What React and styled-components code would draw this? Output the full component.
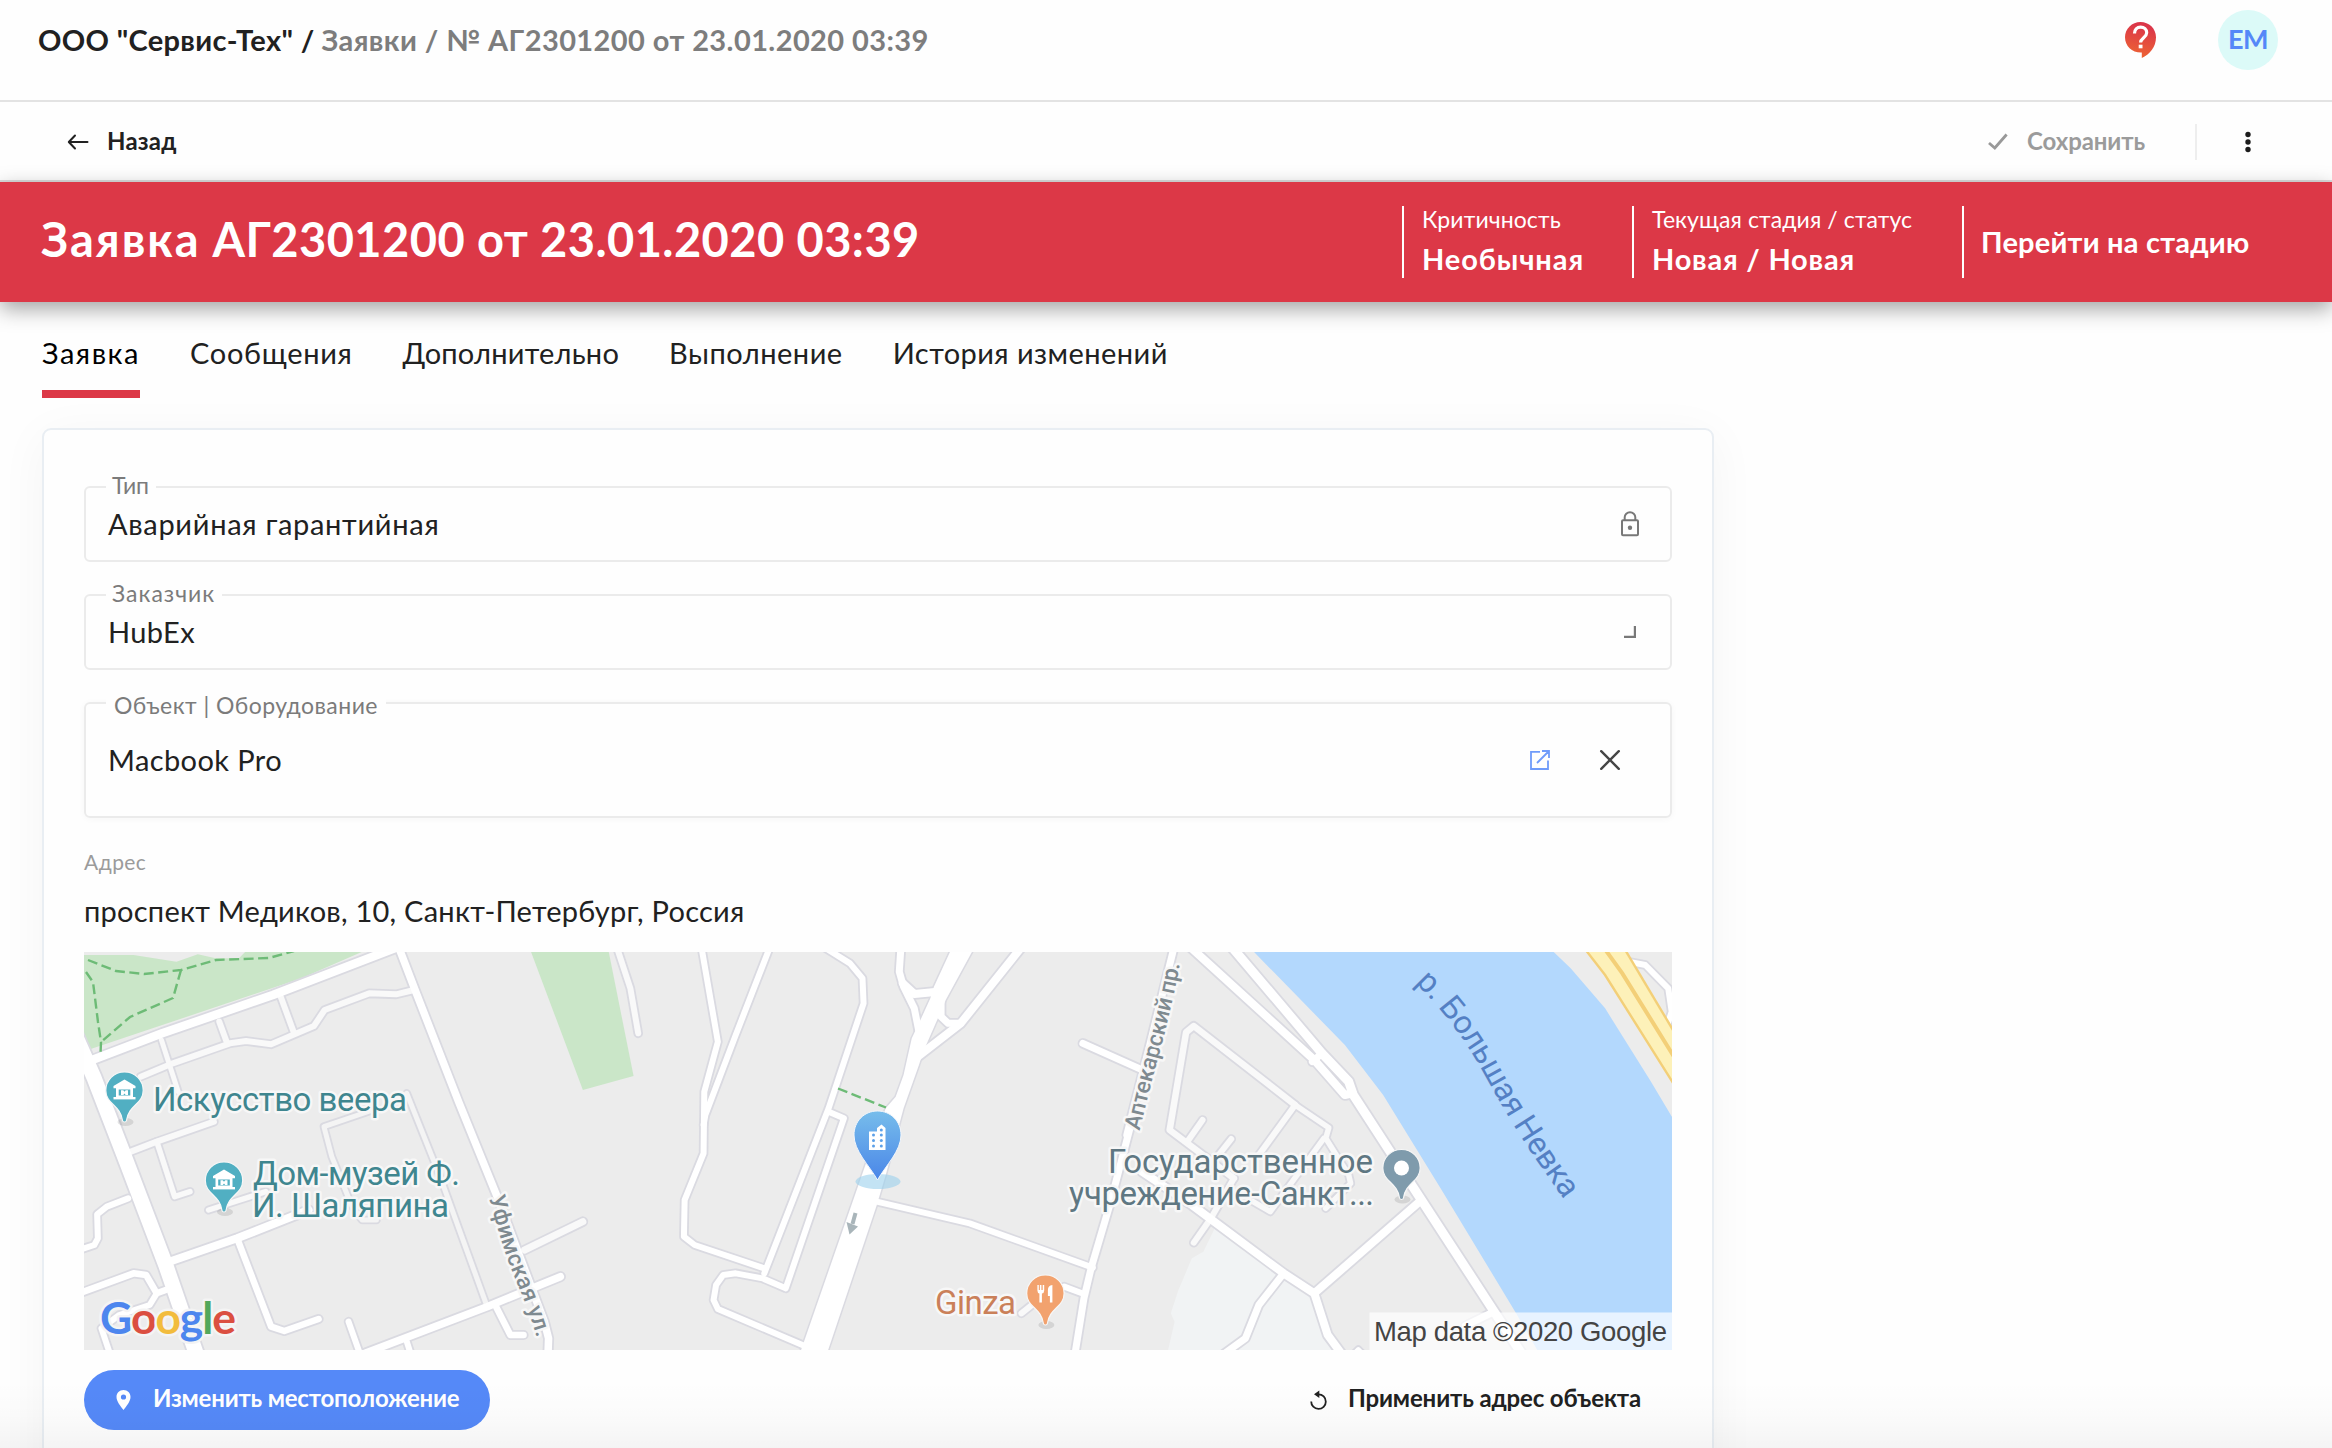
import React from 'react';
import styled, { createGlobalStyle, css } from 'styled-components';

const Global = createGlobalStyle`
  *, *::before, *::after { box-sizing: border-box; }
  body {
    margin: 0;
    background: #fefefe;
    color: #212121;
    font-family: Lato, 'Open Sans', sans-serif;
    font-size: 29px;
    overflow: hidden;
  }
  button {
    border: 0;
    padding: 0;
    background: none;
    font: inherit;
    color: inherit;
  }
`;

const Page = styled.div`
  position: relative;
  display: flex;
  flex-direction: column;
  height: 1448px;
  overflow: hidden;
`;

const BottomFade = styled.div`
  position: absolute;
  left: 0;
  right: 0;
  bottom: 0;
  height: 68px;
  background: linear-gradient(rgba(0, 0, 0, 0), rgba(0, 0, 0, 0.012) 50%, rgba(0, 0, 0, 0.04));
  pointer-events: none;
`;

/* Header */

const Header = styled.header`
  flex: none;
  display: flex;
  align-items: center;
  height: 102px;
  padding: 0 54px 20px 38px;
  border-bottom: 2px solid #e3e3e3;
`;

const Crumbs = styled.nav`
  display: flex;
  gap: 7px;
  padding-bottom: 2px;
  font-weight: 700;
  white-space: nowrap;
`;

const Company = styled.span`
  letter-spacing: 0.34px;
`;

const Trail = styled.span`
  color: #7d7d7d;
  letter-spacing: 0.41px;
`;

const HeaderTools = styled.div`
  display: flex;
  align-items: center;
  gap: 62px;
  margin-left: auto;
`;

const Avatar = styled.div`
  width: 60px;
  height: 60px;
  padding-bottom: 3px;
  border-radius: 50%;
  background: #dcfaf8;
  color: #5588f8;
  display: flex;
  align-items: center;
  justify-content: center;
  font-size: 27px;
  font-weight: 700;
  letter-spacing: -0.6px;
`;

/* Toolbar */

const Toolbar = styled.div`
  flex: none;
  display: flex;
  align-items: center;
  height: 80px;
  padding: 2px 81px 0 66px;
  border-bottom: 2px solid #dcdcdc;
`;

const ToolButton = styled.button`
  display: flex;
  align-items: center;
  gap: ${(p) => p.$gap}px;
  color: ${(p) => p.$color || '#212121'};
  font-size: 24px;
  font-weight: 700;
  letter-spacing: ${(p) => p.$track || 0}px;
  line-height: 30px;
`;

const Raised = styled.span`
  padding-bottom: ${(p) => p.$by}px;
`;

const ToolbarEnd = styled.div`
  display: flex;
  align-items: center;
  margin-left: auto;
`;

const ToolDivider = styled.div`
  width: 2px;
  height: 36px;
  margin: 0 48px 0 50px;
  background: #eeeeee;
`;

/* Banner */

const Banner = styled.section`
  flex: none;
  position: relative;
  display: flex;
  align-items: center;
  height: 120px;
  padding-left: 41px;
  background: #dc3847;
  color: #fff;
  box-shadow: 0 7px 20px rgba(0, 0, 0, 0.36);
`;

const Title = styled.h1`
  margin: 0;
  padding-bottom: 6px;
  font-size: 47px;
  font-weight: 700;
  letter-spacing: 0.42px;
  white-space: nowrap;
`;

const TitleKind = styled.span`
  letter-spacing: 2px;
`;

const Facts = styled.div`
  display: flex;
  margin-left: auto;
`;

const Fact = styled.div`
  width: ${(p) => p.$width}px;
  height: 72px;
  padding-left: 18px;
  border-left: 2px solid #fff;
  white-space: nowrap;
`;

const FactLabel = styled.div`
  font-size: 23px;
  line-height: 27px;
  letter-spacing: 0.1px;
`;

const FactValue = styled.div`
  margin-top: 12px;
  font-weight: 700;
  line-height: 28px;
  letter-spacing: ${(p) => p.$track}px;
`;

const StageLink = styled(Fact).attrs({ as: 'button' })`
  display: flex;
  align-items: center;
  padding: 0 0 2px 17px;
  font-weight: 700;
  letter-spacing: 0.22px;
  border-left: 2px solid #fff;
`;

/* Tabs */

const Tabs = styled.nav`
  flex: none;
  display: flex;
  gap: 50px;
  padding: 31px 0 0 42px;
`;

const Tab = styled.button`
  padding-bottom: 17px;
  border-bottom: 8px solid transparent;
  line-height: 40px;
  letter-spacing: ${(p) => p.$track}px;
  ${(p) =>
    p.$active &&
    css`
      color: #000;
      border-bottom-color: #dc3847;
    `}
`;

/* Card */

const Card = styled.main`
  flex: none;
  width: 1672px;
  height: 1100px;
  margin: 30px 0 0 42px;
  padding: 56px 40px 0;
  border: 2px solid #e9eef3;
  border-radius: 9px;
  box-shadow: 0 8px 50px rgba(0, 0, 0, 0.045);
`;

const Field = styled.div`
  position: relative;
  display: flex;
  align-items: center;
  height: ${(p) => (p.$tall ? 116 : 76)}px;
  padding: 0 ${(p) => (p.$tall ? 48 : 28)}px 0 22px;
  border: 2px solid #ebebeb;
  border-radius: 6px;
  ${(p) => p.$tall && 'box-shadow: 0 1px 7px rgba(0, 0, 0, 0.035);'}

  & + & {
    margin-top: 32px;
  }
`;

const FieldLabel = styled.label`
  position: absolute;
  left: 20px;
  top: ${(p) => (p.$low ? -12 : -16)}px;
  padding: 0 ${(p) => (p.$low ? 8 : 7)}px 0 ${(p) => (p.$low ? 8 : 6)}px;
  background: #fefefe;
  color: #7b7b7b;
  font-size: 23px;
  line-height: 27px;
  letter-spacing: ${(p) => p.$track}px;
`;

const FieldValue = styled.span`
  padding-bottom: 2px;
  letter-spacing: ${(p) => p.$track}px;
`;

const FieldIcons = styled.span`
  display: flex;
  gap: 46px;
  margin-left: auto;

  svg {
    display: block;
  }
`;

const AddressLabel = styled.div`
  margin-top: 31px;
  color: #9b9b9b;
  font-size: 21px;
  line-height: 26px;
  letter-spacing: 0.4px;
`;

const Address = styled.div`
  margin-top: 18px;
  line-height: 36px;
  letter-spacing: 0.24px;
`;

const MapSvg = styled.svg`
  display: block;
  width: 1588px;
  height: 398px;
  margin-top: 23px;
  background: #ececec;
`;

const Actions = styled.div`
  display: flex;
  align-items: center;
  justify-content: space-between;
  margin-top: 20px;
  padding-right: 31px;
`;

const PrimaryButton = styled(ToolButton)`
  width: 406px;
  height: 60px;
  padding-left: 32px;
  border-radius: 30px;
  background: #5589f8;
  color: #fff;
`;

/* Icons */

const HelpIcon = () => (
  <svg width="31" height="36" viewBox="0 0 31 36">
    <defs>
      <linearGradient id="help" x1="0.6" y1="0" x2="0.4" y2="1">
        <stop offset="0.1" stopColor="#db3649" />
        <stop offset="1" stopColor="#ee6533" />
      </linearGradient>
    </defs>
    <path d="M15.5 0C24 0 31 6.6 31 15.2 31 25 24.500 32.500 16.800 36V30.600C7.300 31 0 24.200 0 15.300 0 6.700 7 0 15.500 0Z" fill="url(#help)" />
    <path d="M9.500 11.500C9.500 7.800 12 5.200 15.600 5.200C19.200 5.200 21.700 7.500 21.700 10.800C21.700 15.500 15.600 15.800 15.600 20.500" fill="none" stroke="#fff" strokeWidth="3.200" />
    <rect x="13.700" y="22.700" width="3.800" height="3.600" fill="#fff" />
  </svg>
);

const BackIcon = () => (
  <svg width="24" height="16" viewBox="0 0 24 16" fill="none" stroke="#212121" strokeWidth="2" strokeLinecap="round" strokeLinejoin="round">
    <path d="M21.500 8H3M9 1.500L2.800 8L9 14.500" />
  </svg>
);

const CheckIcon = () => (
  <svg width="20" height="18" viewBox="0 0 20 18" fill="none" stroke="#999" strokeWidth="2.800">
    <path d="M1 10L6.800 15L18.600 1.500" />
  </svg>
);

const DotsIcon = () => (
  <svg width="6" height="22" viewBox="0 0 6 22" fill="#1c1c1c">
    <circle cx="3" cy="3.500" r="2.700" />
    <circle cx="3" cy="11" r="2.700" />
    <circle cx="3" cy="18.500" r="2.700" />
  </svg>
);

const LockIcon = () => (
  <svg width="24" height="26" viewBox="0 0 24 26" fill="none" stroke="#787878" strokeWidth="2">
    <rect x="4" y="9.200" width="16" height="15" rx="1" />
    <path d="M6.700 9V6.200a5.300 5 0 0 1 10.600 0v3" />
    <circle cx="12" cy="16.700" r="2.200" fill="#787878" stroke="none" />
  </svg>
);

const CornerIcon = () => (
  <svg width="24" height="24" viewBox="0 0 24 24" fill="none" stroke="#787878" strokeWidth="2.200">
    <path d="M6 16.900H16.900V6" />
  </svg>
);

const OpenIcon = () => (
  <svg width="24" height="24" viewBox="0 0 24 24" fill="none" stroke="#6f9bfa" strokeWidth="1.800">
    <path d="M12 3.900H3V21H20V12.500M14 3H21V10M21 3L9 15" />
  </svg>
);

const CloseIcon = () => (
  <svg width="24" height="24" viewBox="0 0 24 24" fill="none" stroke="#454545" strokeWidth="2.400" strokeLinecap="round">
    <path d="M3.200 3.200L20.800 20.800M20.800 3.200L3.200 20.800" />
  </svg>
);

const PlaceIcon = () => (
  <svg width="15" height="20" viewBox="0 0 15 20">
    <path fillRule="evenodd" fill="#fff" d="M7.500 0C11.600 0 14.500 3 14.500 7C14.500 11.500 10.500 16 7.500 20C4.500 16 0.500 11.500 0.500 7C0.500 3 3.400 0 7.500 0ZM7.500 4.400A2.600 2.600 0 1 0 7.500 9.600A2.600 2.600 0 1 0 7.500 4.400Z" />
  </svg>
);

const UndoIcon = () => (
  <svg width="18" height="20" viewBox="0 0 18 20" fill="none" stroke="#212121" strokeWidth="1.800">
    <path d="M1.200 11.500A7.300 7.300 0 1 0 8.500 4.300H6" />
    <path d="M9.300 0.500V8L4 4.300Z" fill="#212121" stroke="none" />
  </svg>
);

/* Map */

const SHEETS = [
  {
    id: 'west',
    transform: 'translate(80 945) scale(0.35714 0.33333)',
    roads: [
      ['M820 495L683 545L705 635L760 780L790 825L830 825', 5, '#f4f4f4'],
      ['M915 445L1010 700L1140 1085', 5, '#f4f4f4'],
      ['M170 395L260 355L420 295L465 288L535 298L655 243L685 195L810 145L885 148L935 135', 6, '#f9f9f9'],
      ['M228 285L275 440', 5, '#f9f9f9'],
      ['M390 230L412 295', 6, '#f9f9f9'],
      ['M562 155L598 260', 6, '#f9f9f9'],
      ['M130 625L215 590L375 530', 6, '#f9f9f9'],
      ['M215 590L265 755L308 740', 5.5, '#f9f9f9'],
      ['M135 760L75 785L48 808L50 880L40 900L0 914', 6],
      ['M360 795L520 740', 5.5, '#f9f9f9'],
      ['M250 950L440 880L640 795', 8],
      ['M440 880L535 1145L572 1158L668 1122', 6.5],
      ['M0 1044L150 985L185 990L215 1045L240 1035', 6.5],
      ['M215 1045L195 1080L110 1110L60 1150L85 1230', 6],
      ['M1245 915L1408 830', 7, '#f9f9f9'],
      ['M1165 1085L1205 1170L1242 1170', 6.5],
      ['M752 1130L785 1230', 6],
      ['M915 1190L930 1240', 6],
      ['M800 1224L1140 1085L1345 995', 7.5],
      ['M890 0L940 140L1060 470L1170 760L1300 1130L1312 1180L1310 1240', 7.5],
      ['M10 355L230 265L540 150L900 2', 8.5],
      ['M-30 230L40 400L130 650L240 960L330 1240', 15],
    ],
  },
  {
    id: 'center',
    transform: 'translate(600 945) scale(0.35714 0.33333)',
    roads: [
      ['M45 0L85 130L107 265', 6, '#f9f9f9'],
      ['M283 0L330 290L292 440L290 625L237 765L235 875L265 900L460 970', 6],
      ['M478 0L380 270L295 510L290 540', 6],
      ['M625 5L700 55L735 100L738 175L640 490L460 985', 6],
      ['M640 500L683 520L520 1030L455 1000L380 985L345 990L325 1020L318 1065L330 1092L580 1206', 6],
      ['M843 0L838 80L850 125L880 190L893 260', 7],
      ['M848 115L880 147L945 140', 8],
      ['M1185 0L1010 235L890 335', 8],
      ['M955 150L955 215L975 235L1010 235', 7],
      ['M775 770L1035 835L1380 968', 6],
      ['M1352 295L1515 373', 7],
      ['M1300 1025L1355 1047', 6],
      ['M1180 1105L1215 1075', 6, '#f9f9f9'],
      ['M1485 545L1430 770L1375 970L1355 1060L1328 1240', 7],
    ],
  },
  {
    id: 'east',
    transform: 'translate(1100 945) scale(0.38265 0.33333)',
    roads: [
      ['M510 480L245 243L225 262L182 555L350 700', 6.5, '#f9f9f9'],
      ['M510 480L598 548L590 580L650 690L655 715L590 790', 5.5, '#f9f9f9'],
      ['M510 480L415 630', 6, '#f9f9f9'],
      ['M585 580L445 800L400 770', 5.5, '#f9f9f9'],
      ['M228 590L268 525', 6, '#f9f9f9'],
      ['M310 630L343 582', 6, '#f9f9f9'],
      ['M350 700L290 820L245 893', 6, '#f9f9f9'],
      ['M110 680L240 780L480 985L560 1045L595 1170L640 1240', 8],
      ['M840 765L560 1045', 8],
      ['M480 985L415 1080L380 1180L320 1230', 7],
      ['M1030 1100L955 1142', 7],
      ['M650 1240L675 1212L700 1240', 4],
      ['M195 0L130 300L70 570', 7],
      ['M230 0L560 345L640 450L660 445', 8],
      ['M340 0L580 325L650 410L662 450L840 765L1030 1100L1110 1240', 9],
      ['M555 350L580 325', 7],
      ['M1380 50L1425 60L1485 130L1494 200L1480 250', 6],
    ],
  },
];

const MAIN_ROAD =
  'M989 0L935 125L925 160L893 235L873 280L850 390L828 455L800 490L740 670L555 1240L631 1240L775 780L800 690L850 490L893 360L905 320L948 215L968 165L1052 0Z';

const Halo = styled.text`
  font-family: Roboto, sans-serif;
  font-size: ${(p) => p.$size || 33}px;
  font-weight: ${(p) => p.$weight || 400};
  fill: ${(p) => p.$fill};
  stroke: ${(p) => (p.$bare ? 'none' : '#f7f7f7')};
  stroke-width: 5px;
  stroke-linejoin: round;
  paint-order: stroke;
`;

const Pin = ({ x, y, color, children }) => (
  <g transform={`translate(${x} ${y})`}>
    <ellipse cx="1" cy="50" rx="8" ry="4" fill="#000" opacity="0.1" />
    <path
      d="M0 0C10.500 0 18.700 8 18.700 18.500C18.700 32 4 33 2 48.500C1.600 50.500 -1.600 50.500 -2 48.500C-4 33 -18.700 32 -18.700 18.500C-18.700 8 -10.500 0 0 0Z"
      fill={color}
      stroke="#f7f7f7"
      strokeWidth="1.200"
    />
    {children}
  </g>
);

const MuseumGlyph = () => (
  <g fill="#fff">
    <path d="M0 7.500L11 14V16.200H-11V14Z" />
    <path fillRule="evenodd" d="M-8.500 16H8.500V25H-8.500ZM-5.800 17.500V23.500H5.800V17.500Z" />
    <path d="M-3.500 18.200H-1.200L0 19.800L1.200 18.200H3.500V23H1.200L0 21.500L-1.200 23H-3.500Z" />
    <rect x="-11" y="25" width="22" height="2.400" />
  </g>
);

const LocationMap = () => (
  <MapSvg viewBox="84 952 1588 398">
    <defs>
      <linearGradient id="pin" x1="0" y1="0" x2="0" y2="1">
        <stop offset="0" stopColor="#77bdeb" />
        <stop offset="1" stopColor="#4a86e8" />
      </linearGradient>
      <path id="ufimskaya" d="M489 1197Q503 1250 514 1276Q529 1310 539 1345" />
      <path id="aptekarsky" d="M1139.500 1131L1152 1080Q1172 1010 1181 958" />
      <path id="nevka" d="M1415 983Q1456 1022 1488 1081Q1521 1142 1572 1210" />
    </defs>

    <g transform={SHEETS[0].transform}>
      <path d="M0 30H150L270 50L330 28L380 40H445L465 18H795L620 100L30 312L0 240Z" fill="#cae6c8" />
      <path d="M1262 18H1480L1550 393L1408 435Z" fill="#cae6c8" />
    </g>
    <g transform={SHEETS[2].transform}>
      <path d="M300 850L480 985L560 1045L600 1170L640 1230H175L195 1130L185 1105L205 1035L240 940L270 920Z" fill="#f1f3f4" />
      <path d="M400 18L640 300L740 450L890 730L1085 1100L1150 1230H1510V545L1440 410L1320 190L1230 70L1183 18Z" fill="#b3d8fd" />
    </g>

    {SHEETS.map((sheet) => (
      <g key={sheet.id} transform={sheet.transform} fill="none" stroke="#dadae1" strokeLinecap="round" strokeLinejoin="round">
        {sheet.roads.map(([d, width]) => (
          <path key={d} d={d} strokeWidth={width + 3.6} vectorEffect="non-scaling-stroke" />
        ))}
        {sheet.id === 'center' && <path d={MAIN_ROAD} strokeWidth="3" vectorEffect="non-scaling-stroke" />}
      </g>
    ))}
    {SHEETS.map((sheet) => (
      <g key={sheet.id} transform={sheet.transform} fill="none" strokeLinecap="round" strokeLinejoin="round">
        {sheet.roads.map(([d, width, color]) => (
          <path key={d} d={d} stroke={color || '#fff'} strokeWidth={width} vectorEffect="non-scaling-stroke" />
        ))}
        {sheet.id === 'center' && <path d={MAIN_ROAD} fill="#fff" />}
      </g>
    ))}

    <g transform={SHEETS[2].transform}>
      <path d="M1268 10L1320 90L1500 418V255L1368 10Z" fill="#fdf1b9" />
      <g fill="none" stroke="#f3cf78">
        <path d="M1266 10L1320 90L1500 418" strokeWidth="2.400" vectorEffect="non-scaling-stroke" />
        <path d="M1318 10L1365 85L1500 335" strokeWidth="4" vectorEffect="non-scaling-stroke" />
        <path d="M1370 10L1500 260" strokeWidth="2.400" vectorEffect="non-scaling-stroke" />
      </g>
    </g>

    <g fill="none" stroke="#6dbb76" strokeWidth="2.400" strokeDasharray="10 4.500">
      <path d="M88 960L116 971L144 974L181 970L216 960L269 958L294 951" />
      <path d="M181 970L173 998L130 1017L101 1042" />
      <path d="M86 972L93 982L98 1022L101 1042L100.500 1054" />
      <path d="M838 1088.500L886 1107.500" />
    </g>
    <path d="M855.500 1213L852.500 1224" stroke="#a9b5ba" strokeWidth="4" />
    <path d="M846.500 1222L858 1226.500L849.500 1234.500Z" fill="#a9b5ba" />

    <Halo $fill="#7f8a90" $size={23} $weight={500}>
      <textPath href="#ufimskaya" textLength="149">Уфимская ул.</textPath>
    </Halo>
    <Halo $fill="#7f8a90" $size={23} $weight={500}>
      <textPath href="#aptekarsky" textLength="172">Аптекарский пр.</textPath>
    </Halo>
    <Halo $fill="#5480c4" $size={32} $bare>
      <textPath href="#nevka" textLength="264">р. Большая Невка</textPath>
    </Halo>
    <Halo x="153" y="1111" textLength="254" $fill="#3f868f">Искусство веера</Halo>
    <Halo x="253" y="1184.500" textLength="207" $fill="#3f868f">Дом-музей Ф.</Halo>
    <Halo x="252" y="1217" textLength="197" $fill="#3f868f">И. Шаляпина</Halo>
    <Halo x="1108" y="1172.500" textLength="265" $fill="#5f7782">Государственное</Halo>
    <Halo x="1069" y="1205" textLength="305" $fill="#5f7782">учреждение-Санкт...</Halo>
    <Halo x="935" y="1314" textLength="81" $fill="#ca8059">Ginza</Halo>

    <Pin x={124.5} y={1072} color="#51afc2"><MuseumGlyph /></Pin>
    <Pin x={224} y={1162} color="#51afc2"><MuseumGlyph /></Pin>
    <Pin x={1401.5} y={1149.5} color="#7f9bac"><circle cx="0" cy="18.500" r="7.500" fill="#fff" /></Pin>
    <Pin x={1045.4} y={1275} color="#f2a26e">
      <path d="M-8 10V15.500Q-8 18 -6 18.500V27.500H-3.500V18.500Q-1.200 18 -1.200 15.500V10H-2.700V15H-4V10H-5.500V15H-6.600V10ZM7 10V27.500H4.500V21H2.500V15Q2.500 10.500 7 10Z" fill="#fff" />
    </Pin>

    <ellipse cx="878" cy="1181.500" rx="22.500" ry="7.500" fill="#9bd1ec" opacity="0.6" />
    <path d="M877.500 1111C891 1111 901 1121.500 901 1135C901 1151 886 1165 877.500 1180C869 1165 854 1151 854 1135C854 1121.500 864 1111 877.500 1111Z" fill="url(#pin)" stroke="#f4f7fb" strokeWidth="1" />
    <path d="M869 1131.500H877V1128L881.500 1124.500L885.500 1128V1150H869Z" fill="#fff" />
    <g fill="#5ca0e8">
      {[1135, 1140.5, 1146].map((y) => (
        <React.Fragment key={y}>
          <circle cx="873.500" cy={y} r="1.500" />
          <circle cx="881.300" cy={y} r="1.500" />
        </React.Fragment>
      ))}
      <circle cx="881.300" cy="1130" r="1.500" />
    </g>

    <text x="100" y="1333.500" fontFamily="Lato, sans-serif" fontWeight="700" fontSize="44.500" textLength="136" strokeWidth="5" stroke="#f4f4f4" strokeLinejoin="round" paintOrder="stroke">
      <tspan fill="#4d86ee">G</tspan>
      <tspan fill="#db4f41">o</tspan>
      <tspan fill="#f2bc3d">o</tspan>
      <tspan fill="#4d86ee">g</tspan>
      <tspan fill="#53a85b">l</tspan>
      <tspan fill="#db4f41">e</tspan>
    </text>

    <rect x="1369.500" y="1312.500" width="303" height="38" fill="#fff" opacity="0.7" />
    <text x="1374" y="1341" fontFamily="'Liberation Sans', Arial, sans-serif" fontSize="27.500" textLength="293" fill="#444">
      Map data ©2020 Google
    </text>
  </MapSvg>
);

const TABS = [
  { name: 'Заявка', track: 1.5 },
  { name: 'Сообщения', track: 0.68 },
  { name: 'Дополнительно', track: 0.22 },
  { name: 'Выполнение', track: 0.5 },
  { name: 'История изменений', track: 0.45 },
];

export default function App() {
  return (
    <Page>
      <Global />
      <Header>
        <Crumbs>
          <Company>ООО "Сервис-Тех" /</Company>
          <Trail>Заявки / № АГ2301200 от 23.01.2020 03:39</Trail>
        </Crumbs>
        <HeaderTools>
          <HelpIcon />
          <Avatar>EM</Avatar>
        </HeaderTools>
      </Header>

      <Toolbar>
        <ToolButton $gap={17} $track={0.2}>
          <BackIcon />
          <Raised $by={3}>Назад</Raised>
        </ToolButton>
        <ToolbarEnd>
          <ToolButton $gap={19} $color="#9b9b9b" $track={-0.1}>
            <CheckIcon />
            <Raised $by={3}>Сохранить</Raised>
          </ToolButton>
          <ToolDivider />
          <DotsIcon />
        </ToolbarEnd>
      </Toolbar>

      <Banner>
        <Title>
          <TitleKind>Заявка</TitleKind> АГ2301200 от 23.01.2020 03:39
        </Title>
        <Facts>
          <Fact $width={230}>
            <FactLabel>Критичность</FactLabel>
            <FactValue $track={0.9}>Необычная</FactValue>
          </Fact>
          <Fact $width={330}>
            <FactLabel>Текущая стадия / статус</FactLabel>
            <FactValue $track={0.78}>Новая / Новая</FactValue>
          </Fact>
          <StageLink $width={370}>Перейти на стадию</StageLink>
        </Facts>
      </Banner>

      <Tabs>
        {TABS.map((tab, i) => (
          <Tab key={tab.name} $track={tab.track} $active={i === 0}>
            {tab.name}
          </Tab>
        ))}
      </Tabs>

      <Card>
        <Field>
          <FieldLabel $track={-0.1}>Тип</FieldLabel>
          <FieldValue $track={0.7}>Аварийная гарантийная</FieldValue>
          <FieldIcons>
            <LockIcon />
          </FieldIcons>
        </Field>
        <Field>
          <FieldLabel $track={1}>Заказчик</FieldLabel>
          <FieldValue $track={0.4}>HubEx</FieldValue>
          <FieldIcons>
            <CornerIcon />
          </FieldIcons>
        </Field>
        <Field $tall>
          <FieldLabel $low $track={0.46}>Объект | Оборудование</FieldLabel>
          <FieldValue $track={0.4}>Macbook Pro</FieldValue>
          <FieldIcons>
            <OpenIcon />
            <CloseIcon />
          </FieldIcons>
        </Field>

        <AddressLabel>Адрес</AddressLabel>
        <Address>проспект Медиков, 10, Санкт-Петербург, Россия</Address>
        <LocationMap />

        <Actions>
          <PrimaryButton $gap={22} $track={-0.2}>
            <PlaceIcon />
            <Raised $by={4}>Изменить местоположение</Raised>
          </PrimaryButton>
          <ToolButton $gap={20} $track={-0.13}>
            <UndoIcon />
            <Raised $by={4}>Применить адрес объекта</Raised>
          </ToolButton>
        </Actions>
      </Card>
      <BottomFade />
    </Page>
  );
}
